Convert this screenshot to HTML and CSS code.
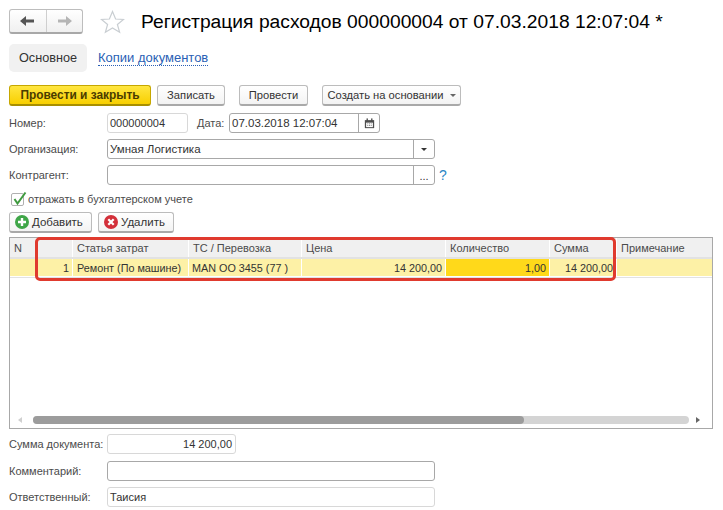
FILE: index.html
```html
<!DOCTYPE html>
<html lang="ru">
<head>
<meta charset="utf-8">
<title>Регистрация расходов</title>
<link rel="stylesheet" href="styles.css">
</head>
<body>
<div class="page">
  <header class="head">
    <div class="nav">
      <span class="nav-btn">
        <svg width="15" height="12" viewBox="0 0 15 12"><path d="M0 6 L6 1 V4.5 H14 V7.5 H6 V11 Z" fill="#555"/></svg>
      </span>
      <span class="nav-btn">
        <svg width="15" height="12" viewBox="0 0 15 12"><path d="M15 6 L9 1 V4.5 H1 V7.5 H9 V11 Z" fill="#b5b5b5"/></svg>
      </span>
    </div>
    <svg class="star" width="25" height="24" viewBox="0 0 25 24"><path d="M12.5 1.5 L15.6 9 L23.5 9.4 L17.4 14.5 L19.6 22.3 L12.5 18 L5.4 22.3 L7.6 14.5 L1.5 9.4 L9.4 9 Z" fill="#fff" stroke="#c9ced2" stroke-width="1.2"/></svg>
    <h1 class="title">Регистрация расходов 000000004 от 07.03.2018 12:07:04 *</h1>
  </header>

  <nav class="tabs">
    <span class="tab">Основное</span>
    <a class="tab-link">Копии документов</a>
  </nav>

  <div class="toolbar">
    <button class="btn primary w-post">Провести и закрыть</button>
    <button class="btn w-save">Записать</button>
    <button class="btn w-run">Провести</button>
    <button class="btn w-create">Создать на основании<i class="caret"></i></button>
  </div>

  <div class="row first">
    <label class="lbl">Номер:</label>
    <div class="field soft w-num"><span class="val small">000000004</span></div>
    <label class="lbl-date">Дата:</label>
    <div class="field w-date"><span class="val">07.03.2018 12:07:04</span>
      <span class="addon">
        <svg width="11" height="11" viewBox="0 0 13 13"><path d="M1 2.5 H12 V12 H1 Z" fill="#4d4d4d"/><rect x="3" y="0.5" width="1.6" height="3" fill="#4d4d4d"/><rect x="8.4" y="0.5" width="1.6" height="3" fill="#4d4d4d"/><path d="M2.5 5.5 H10.5 V10.8 H2.5 Z" fill="#fff"/><path d="M4 6.5h1v1H4zM6 6.5h1v1H6zM8 6.5h1v1H8zM4 8.5h1v1H4zM6 8.5h1v1H6zM8 8.5h1v1H8z" fill="#4d4d4d"/></svg>
      </span>
    </div>
  </div>
  <div class="row">
    <label class="lbl">Организация:</label>
    <div class="field w-wide"><span class="val">Умная Логистика</span><span class="addon"><i class="caret dark"></i></span></div>
  </div>
  <div class="row">
    <label class="lbl">Контрагент:</label>
    <div class="field w-wide"><span class="val"></span><span class="addon dots">...</span></div>
    <span class="help">?</span>
  </div>

  <div class="check-row">
    <svg width="17" height="16" viewBox="0 0 17 16"><rect x="0.5" y="2.5" width="12" height="12" rx="1.5" fill="#fff" stroke="#b0b0b0"/><path d="M3.5 8 L6.5 12.5 L14.5 1.5" fill="none" stroke="#3f9a3f" stroke-width="2"/></svg>
    <span>отражать в бухгалтерском учете</span>
  </div>

  <div class="actions">
    <button class="btn icon w-add">
      <svg width="14" height="14" viewBox="0 0 14 14"><circle cx="7" cy="7" r="7" fill="#3fa648"/><path d="M7 3 V11 M3 7 H11" stroke="#fff" stroke-width="2.4"/></svg>Добавить</button>
    <button class="btn icon w-del">
      <svg width="14" height="14" viewBox="0 0 14 14"><circle cx="7" cy="7" r="7" fill="#d3303a"/><path d="M4.3 4.3 L9.7 9.7 M9.7 4.3 L4.3 9.7" stroke="#fff" stroke-width="2.2"/></svg>Удалить</button>
  </div>

  <section class="grid">
    <div class="grid-row grid-head">
      <div class="cell">N</div>
      <div class="cell"></div>
      <div class="cell">Статья затрат</div>
      <div class="cell">ТС / Перевозка</div>
      <div class="cell">Цена</div>
      <div class="cell">Количество</div>
      <div class="cell">Сумма</div>
      <div class="cell">Примечание</div>
    </div>
    <div class="grid-row grid-data">
      <div class="cell"></div>
      <div class="cell num">1</div>
      <div class="cell">Ремонт (По машине)</div>
      <div class="cell tight">MAN OO 3455 (77 )</div>
      <div class="cell num">14 200,00</div>
      <div class="cell num active">1,00</div>
      <div class="cell num">14 200,00</div>
      <div class="cell"></div>
    </div>
    <div class="grid-empty"></div>
    <div class="scroll">
      <i class="arrow left"></i>
      <div class="track"><div class="thumb"></div></div>
      <i class="arrow right"></i>
    </div>
    <div class="marker"></div>
  </section>

  <div class="row foot">
    <label class="lbl">Сумма документа:</label>
    <div class="field soft w-sum"><span class="val end">14 200,00</span></div>
  </div>
  <div class="row after-foot">
    <label class="lbl">Комментарий:</label>
    <div class="field w-long"><span class="val"></span></div>
  </div>
  <div class="row">
    <label class="lbl">Ответственный:</label>
    <div class="field soft w-long"><span class="val small">Таисия</span></div>
  </div>
</div>
</body>
</html>
```

FILE: styles.css
```css
* { box-sizing: border-box; }
html, body { margin: 0; padding: 0; background: #fff; }
body { width: 723px; height: 510px; overflow: hidden; font-family: "Liberation Sans", Arial, sans-serif; font-size: 11px; color: #333; }
.page { padding: 9px 10px 0 9px; }

.head { display: flex; align-items: center; height: 25px; }
.nav { display: flex; width: 74px; height: 25px; border: 1px solid #bdbdbd; border-bottom: 2px solid #a8a8a8; border-radius: 3px; background: linear-gradient(#fff, #f0f0f0); }
.nav-btn { flex: 1; display: flex; align-items: center; justify-content: center; }
.nav-btn + .nav-btn { border-left: 1px solid #cfcfcf; }
.star { margin-left: 17px; margin-top: 1px; }
.title { margin: 0 0 0 16px; padding-top: 1px; font-size: 19.25px; font-weight: 400; color: #000; white-space: nowrap; }

.tabs { display: flex; align-items: center; margin-top: 10px; height: 28px; }
.tab { display: flex; align-items: center; justify-content: center; width: 78px; height: 28px; background: #f1f1f1; border-radius: 5px; font-size: 12.7px; color: #333; }
.tab-link { margin-left: 11px; font-size: 13px; color: #2a5fb5; border-bottom: 1px dotted #2a5fb5; line-height: 14px; }

.toolbar { display: flex; margin-top: 13px; height: 21px; }
.btn { height: 21px; padding: 0; margin: 0; display: flex; align-items: center; justify-content: center; font: inherit; font-size: 11.2px; color: #333; background: linear-gradient(#fff, #f3f3f3); border: 1px solid #bcbcbc; border-bottom: 2px solid #a9a9a9; border-radius: 3px; white-space: nowrap; }
.primary { font-size: 11.9px; font-weight: 700; color: #4a3c00; background: linear-gradient(#ffe640, #f8cf00); border-color: #c6a700; border-bottom-color: #a88f00; }
.w-post { width: 142px; }
.w-save { width: 68px; margin-left: 6px; }
.w-run { width: 69px; margin-left: 14px; }
.w-create { width: 139px; margin-left: 14px; }
.caret { display: inline-block; margin-left: 6px; width: 0; height: 0; border-left: 3px solid transparent; border-right: 3px solid transparent; border-top: 3px solid #666; }
.caret.dark { margin: 0; border-top-color: #333; }

.row { display: flex; align-items: center; height: 20px; margin-top: 6px; }
.row.first { margin-top: 7px; }
.row.foot { margin-top: 5px; }
.row.after-foot { margin-top: 7px; }
.lbl { width: 98px; flex: none; color: #4b4b4b; white-space: nowrap; }
.lbl-date { margin-left: 9px; width: 32px; color: #4b4b4b; }
.field { display: flex; align-items: stretch; height: 100%; border: 1px solid #a8a8a8; border-radius: 3px; background: #fff; }
.field.soft { border-color: #d8d8d8; }
.val { flex: 1; display: flex; align-items: center; padding: 0 2px; font-size: 11.5px; color: #333; white-space: nowrap; overflow: hidden; }
.val.small { font-size: 11px; }
.val.end { justify-content: flex-end; padding-right: 3px; font-size: 11px; }
.addon { width: 21px; flex: none; display: flex; align-items: center; justify-content: center; border-left: 1px solid #a8a8a8; }
.dots { align-items: flex-end; padding-bottom: 3px; line-height: 10px; }
.w-num { width: 81px; }
.w-date { width: 151px; }
.w-wide { width: 328px; }
.w-sum { width: 129px; }
.w-long { width: 328px; }
.help { margin-left: 4px; font-size: 14px; color: #2b86c5; }

.check-row { display: flex; align-items: center; height: 16px; margin-top: 6px; padding-left: 2px; color: #4b4b4b; }
.actions { display: flex; gap: 6px; margin-top: 5px; height: 21px; }
.btn.icon { justify-content: flex-start; padding-left: 5px; gap: 3px; font-size: 11.5px; }
.w-add { width: 83px; }
.w-del { width: 76px; }

.grid { position: relative; margin-top: 4px; width: 704px; height: 192px; border: 1px solid #a8a8a8; display: flex; flex-direction: column; }
.grid-row { display: grid; grid-template-columns: 27px 36px 116px 113px 144px 104px 67px 1fr; }
.grid-head { height: 21px; border-bottom: 2px solid #e2e2e2; }
.grid-head .cell { background: #f0f0f0; color: #4b4b4b; }
.grid-data { height: 17px; }
.grid-data .cell { background: #fdf1a6; font-size: 10.8px; }
.cell { display: flex; align-items: center; padding: 0 3px 0 4px; border-right: 1px solid #fff; white-space: nowrap; overflow: hidden; color: #333; }
.cell:last-child { border-right: 0; }
.cell.num { justify-content: flex-end; padding-right: 3px; }
.cell.tight { padding-left: 3px; }
.grid-data .cell.active { background: #ffd91a; }
.grid-empty { flex: 1; border-top: 1px solid #e2e2e2; margin-top: 1px; }
.scroll { display: flex; align-items: center; height: 8px; margin-bottom: 4px; padding-left: 8px; }
.track { width: 656px; margin-left: 11px; height: 8px; background: #d4d4d4; border-radius: 4px; }
.thumb { width: 491px; height: 8px; background: #9c9c9c; border-radius: 4px; }
.arrow { display: block; width: 0; height: 0; border-top: 3px solid transparent; border-bottom: 3px solid transparent; }
.arrow.left { border-right: 4px solid #d0d0d0; }
.arrow.right { margin-left: 7px; border-left: 4px solid #666; }
.marker { position: absolute; left: 25px; top: -1px; width: 581px; height: 44px; border: 3px solid #e03a2e; border-radius: 5px; pointer-events: none; }
```
